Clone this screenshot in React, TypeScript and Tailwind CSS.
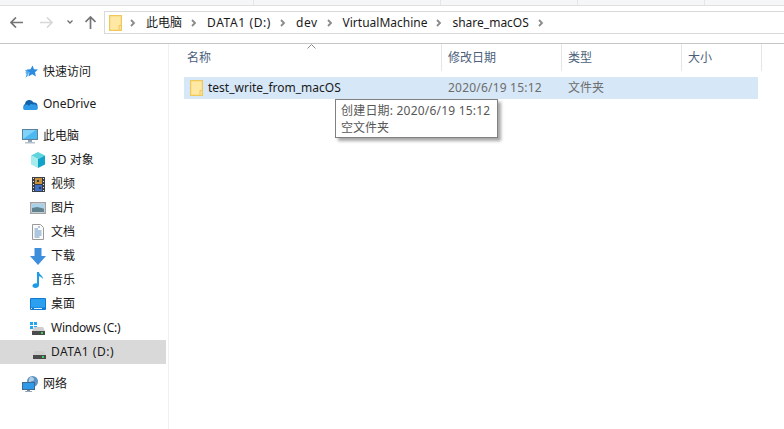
import type { ReactNode } from "react";

const Chevron = () => (
  <svg width="6" height="8" viewBox="0 0 6 8" className="shrink-0">
    <path d="M1 1 L4 4 L1 7" fill="none" stroke="#8a8a8a" strokeWidth="1.800" />
  </svg>
);

const FolderIcon = ({ className = "" }: { className?: string }) => (
  <svg width="13" height="16" viewBox="0 0 13 16" className={className}>
    <path d="M.6.6h11.800v14.800H.6z" fill="#fee8a4" stroke="#f0c85a" strokeWidth="1.200" />
    <path d="M10 15.400V10.500h2.400" fill="#fde49a" stroke="#f0c85a" />
  </svg>
);

const StarIcon = () => (
  <svg width="16" height="16" viewBox="0 0 16 16">
    <path d="M3 6h5l-2 5.500-2.500 2.500 1-4-1.500-1.500h1.500z" fill="#55aaec" />
    <path d="M10.500 1.500l1.500 3.700 4 .4-3 2.700.9 4.200-3.700-2.200-3.700 2.200.9-4.200-2.900-2.700 4-.4z" fill="#2b8be0" />
  </svg>
);

const CloudIcon = () => (
  <svg width="16" height="11" viewBox="0 0 16 11">
    <path d="M3.500 10.500A3 3 0 0 1 3 5 4.500 4.500 0 0 1 11.500 3.500a3.500 3.500 0 0 1 1 7z" fill="#0f62ab" />
    <path d="M2 11h12a1.800 1.800 0 0 0 1.200-3.200A3 3 0 0 0 11 5.500 3 3 0 0 0 7 7 3 3 0 0 0 2 11z" fill="#2f9ae8" />
  </svg>
);

const PcIcon = () => (
  <svg width="16" height="15" viewBox="0 0 16 15">
    <rect x=".5" y=".5" width="15" height="10" fill="#7fd3fa" stroke="#5c7f9c" />
    <path d="M1 10L14 1h1v9z" fill="#4cb8f2" />
    <rect x="6" y="11" width="4" height="2" fill="#8fa3b3" />
    <rect x="3" y="13" width="10" height="1.500" fill="#b6c2cc" />
  </svg>
);

const CubeIcon = () => (
  <svg width="16" height="16" viewBox="0 0 16 16">
    <path d="M8 0l7 3.500-7 3.500-7-3.500z" fill="#5fd4de" />
    <path d="M1 3.500l7 3.500v9l-7-3.500z" fill="#a6ecee" />
    <path d="M15 3.500L8 7v9l7-3.500z" fill="#12a3c9" />
  </svg>
);

const FilmIcon = () => (
  <svg width="13" height="15" viewBox="0 0 13 15">
    <rect width="13" height="15" fill="#3b3f48" />
    <rect x="3" y="1" width="7" height="6" fill="#c7913a" />
    <rect x="3" y="8" width="7" height="6" fill="#3e6fc4" />
    <path d="M5 3h2v2H5zM7 10h2v2H7z" fill="#2f3a55" />
    <path d="M1 1h1v1H1zM1 4h1v1H1zM1 7h1v1H1zM1 10h1v1H1zM1 13h1v1H1zM11 1h1v1h-1zM11 4h1v1h-1zM11 7h1v1h-1zM11 10h1v1h-1zM11 13h1v1h-1z" fill="#e8e8e8" />
  </svg>
);

const PictureIcon = () => (
  <svg width="16" height="12" viewBox="0 0 16 12">
    <rect x=".75" y=".75" width="14.500" height="10.500" fill="#f5f7f9" stroke="#a0a4a8" strokeWidth="1.500" />
    <rect x="2" y="2" width="12" height="4" fill="#a9d2ea" />
    <path d="M2 6l5-1 7 1.500V10H2z" fill="#5f8490" />
  </svg>
);

const DocIcon = () => (
  <svg width="12" height="16" viewBox="0 0 12 16">
    <path d="M.5.500h8l3 3v12H.5z" fill="#fbfbfb" stroke="#9a9a9a" />
    <path d="M2.500 5h3.500M6 3h2M2.500 7h7M2.500 9h7M2.500 11h7M2.500 13h5" stroke="#5f93c0" />
  </svg>
);

const DownIcon = () => (
  <svg width="16" height="17" viewBox="0 0 16 17">
    <path d="M4.500 0h7v8H16l-8 9-8-9h4.500z" fill="#3d8fdc" />
  </svg>
);

const MusicIcon = () => (
  <svg width="12" height="16" viewBox="0 0 12 16">
    <path d="M5 0h2c.3 3 4 3.500 4 7-1-1.500-2.500-2.500-4-2.800V13c0 1.800-1.700 3-3.500 3S0 15 .5 13.500 3 11 5 11.400z" fill="#1c9be6" />
  </svg>
);

const DesktopIcon = () => (
  <svg width="16" height="12" viewBox="0 0 16 12">
    <rect width="16" height="12" rx="1" fill="#1279d3" />
    <rect x="1" y="1" width="14" height="8.500" fill="#2aa0ee" />
    <path d="M1 10h1v1H1zM4 10h8v1H4z" fill="#d8eefb" />
  </svg>
);

const DriveIcon = () => (
  <svg width="13" height="8" viewBox="0 0 13 8">
    <path d="M2 0h9l2 4H0z" fill="#cfcfcf" />
    <rect y="4" width="13" height="4" fill="#4b4b4b" />
    <rect x="9" y="5" width="2" height="2" fill="#38d45c" />
  </svg>
);

const WinDriveIcon = () => (
  <div className="relative w-4 h-4">
    <svg width="7" height="7" viewBox="0 0 7 7" className="absolute left-0 top-[2px]">
      <path d="M0 0h3v3H0zM4 0h3v3H4zM0 4h3v3H0zM4 4h3v3H4z" fill="#22a7f0" />
    </svg>
    <div className="absolute left-[2px] bottom-[1px] flex">
      <DriveIcon />
    </div>
  </div>
);

const NetworkIcon = () => (
  <svg width="16" height="16" viewBox="0 0 16 16">
    <circle cx="10.500" cy="5.500" r="5.500" fill="#5d94c4" />
    <path d="M8 1.500c2-1 4 0 4 2s-3 1-4 3-2-3 0-5z" fill="#b2cfe6" />
    <rect x=".5" y="6.500" width="12" height="7" fill="#2f9be8" stroke="#3f6b90" />
    <rect x="5" y="14" width="3" height="1" fill="#7b8b99" />
    <rect x="3" y="15" width="7" height="1" fill="#9aa7b2" />
  </svg>
);

type NavItem = { icon: ReactNode; label: string; selected?: boolean; labelClass?: string; iconClass?: string };

const pcItems: NavItem[] = [
  { icon: <CubeIcon />, label: "3D 对象" },
  { icon: <FilmIcon />, label: "视频" },
  { icon: <PictureIcon />, label: "图片" },
  { icon: <DocIcon />, label: "文档" },
  { icon: <DownIcon />, label: "下载" },
  { icon: <MusicIcon />, label: "音乐" },
  { icon: <DesktopIcon />, label: "桌面" },
  { icon: <WinDriveIcon />, label: "Windows (C:)", labelClass: "tracking-[-0.25px]" },
  { icon: <DriveIcon />, label: "DATA1 (D:)", selected: true, labelClass: "tracking-[0.5px]", iconClass: "pt-[6px] pl-[2px]" },
];

const NavRow = ({ icon, label, selected, labelClass = "", iconClass = "", child }: NavItem & { child?: boolean }) => (
  <div className={`h-6 flex items-center ${child ? "pl-[30px]" : "pl-[22px]"} ${selected ? "bg-[#d9d9d9]" : ""}`}>
    <span className={`w-4 h-4 flex items-center justify-center shrink-0 ${iconClass}`}>{icon}</span>
    <span className={`ml-[5px] text-[#1a1a1a] ${labelClass}`}>{label}</span>
  </div>
);

const crumbs = [
  { label: "此电脑", cls: "" },
  { label: "DATA1 (D:)", cls: "tracking-[0.6px]" },
  { label: "dev", cls: "tracking-[0.5px]" },
  { label: "VirtualMachine", cls: "" },
  { label: "share_macOS", cls: "" },
];

export default function App() {
  return (
    <div
      className="w-[784px] h-[429px] overflow-hidden bg-white text-[12px] leading-4 flex flex-col"
      style={{ fontFamily: '"Noto Sans", "Noto Sans CJK SC", sans-serif' }}
    >
      {/* ribbon edge */}
      <div className="h-[6px] flex bg-[#f5f6f7] border-b border-[#e0e0e0]">
        <div className="w-[254px] border-r border-[#e6e6e6]" />
        <div className="w-[187px] border-r border-[#e6e6e6]" />
        <div className="w-[137px] border-r border-[#e6e6e6]" />
        <div className="w-[127px] border-r border-[#e6e6e6]" />
      </div>

      {/* toolbar */}
      <div className="h-[38px] border-b border-[#c6c6c6] flex items-start pt-[5px] pl-[10px]">
        <div className="h-[22px] flex items-center shrink-0">
          <svg width="13" height="11" viewBox="0 0 13 11">
            <path d="M6 .5L1 5.500l5 5M1 5.500h12" fill="none" stroke="#757575" strokeWidth="1.700" />
          </svg>
          <svg width="13" height="11" viewBox="0 0 13 11" className="ml-[17px]">
            <path d="M7 .5l5 5-5 5M12 5.500H0" fill="none" stroke="#d8d8d8" strokeWidth="1.700" />
          </svg>
          <svg width="6" height="4" viewBox="0 0 6 4" className="ml-[14px]">
            <path d="M.5.5L3 3 5.500.5" fill="none" stroke="#707070" strokeWidth="1.300" />
          </svg>
          <svg width="11" height="13" viewBox="0 0 11 13" className="ml-[12px]">
            <path d="M.5 6l5-5 5 5M5.500 1v12" fill="none" stroke="#757575" strokeWidth="1.700" />
          </svg>
        </div>
        <div className="ml-[8px] flex-1 h-[23px] border-y border-l border-[#d9d9d9] flex items-center pl-[4px] text-[#1a1a1a]">
          <FolderIcon className="mr-[-1px]" />
          {crumbs.map((c) => (
            <div key={c.label} className="flex items-center">
              <span className="ml-[9px] mr-[10px]">
                <Chevron />
              </span>
              <span className={c.cls}>{c.label}</span>
            </div>
          ))}
          <span className="ml-[9px]">
            <Chevron />
          </span>
        </div>
      </div>

      <div className="flex flex-1 min-h-0">
        {/* nav pane */}
        <div className="w-[169px] shrink-0 pr-[2px] border-r border-[#f0f0f0] pt-[16px]">
          <NavRow icon={<StarIcon />} label="快速访问" />
          <div className="mt-2">
            <NavRow icon={<CloudIcon />} label="OneDrive" />
          </div>
          <div className="mt-2">
            <NavRow icon={<PcIcon />} label="此电脑" />
            {pcItems.map((item) => (
              <NavRow key={item.label} {...item} child />
            ))}
          </div>
          <div className="mt-2">
            <NavRow icon={<NetworkIcon />} label="网络" />
          </div>
        </div>

        {/* file list */}
        <div className="relative flex-1 pl-[15px]">
          <div className="flex h-[27px] text-[#4c607a]">
            <div className="relative w-[258px] pl-[3px] pt-[6px] border-r border-[#e5e5e5]">
              名称
              <svg width="9" height="5" viewBox="0 0 9 5" className="absolute left-[123px] top-0">
                <path d="M.5 4.500l4-4 4 4" fill="none" stroke="#8a8a8a" />
              </svg>
            </div>
            <div className="w-[120px] pl-[6px] pt-[6px] border-r border-[#e5e5e5]">修改日期</div>
            <div className="w-[120px] pl-[6px] pt-[6px] border-r border-[#e5e5e5]">类型</div>
            <div className="w-[80px] pl-[6px] pt-[6px] border-r border-[#e5e5e5]">大小</div>
          </div>
          <div className="mt-[6px] w-[574px] h-[22px] bg-[#d6e7f7] flex items-center">
            <div className="w-[258px] pl-[6px] flex items-center text-[#1a1a1a]">
              <FolderIcon />
              <span className="ml-[5px]">test_write_from_macOS</span>
            </div>
            <div className="w-[120px] pl-[6px] text-[#6d6d6d] tracking-[0.2px]">2020/6/19 15:12</div>
            <div className="pl-[6px] text-[#6d6d6d]">文件夹</div>
          </div>

          {/* tooltip */}
          <div className="absolute left-[166px] top-[55px] w-[163px] h-[39px] bg-white border border-[#808080] px-[5px] pt-[3px] text-[#575757] shadow-[3px_3px_3px_rgba(0,0,0,0.35)]">
            <div className="h-[17px] tracking-[0.2px] whitespace-nowrap">创建日期: 2020/6/19 15:12</div>
            <div>空文件夹</div>
          </div>
        </div>
      </div>
    </div>
  );
}
